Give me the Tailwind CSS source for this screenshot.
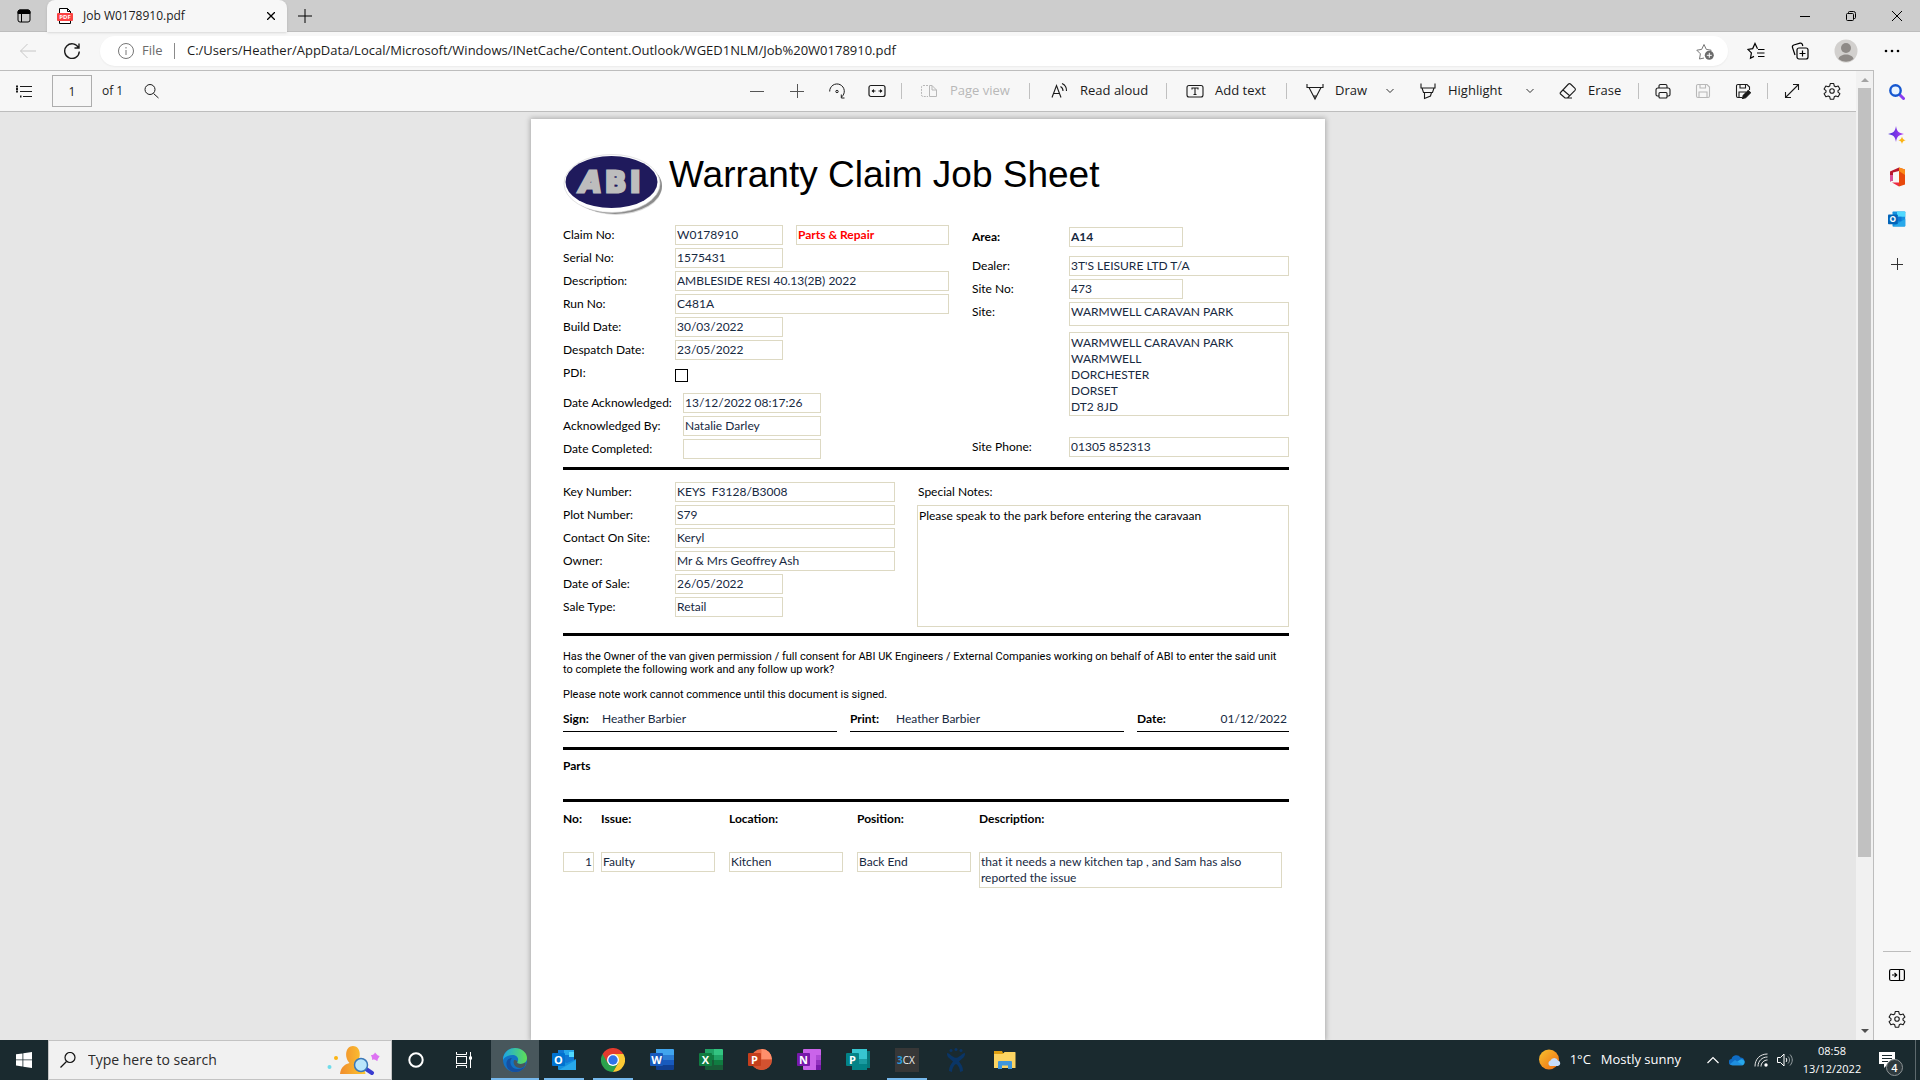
<!DOCTYPE html>
<html lang="en">
<head>
    <meta charset="UTF-8">
    <meta name="viewport" content="width=device-width, initial-scale=1.0">
    <title>Job W0178910.pdf</title>
    <script src="https://cdn.jsdelivr.net/npm/@tailwindcss/browser@4"></script>
</head>
<body class="h-screen flex flex-col overflow-hidden bg-[#f7f7f7] text-[#1b1b1b] text-[13px] font-['Open_Sans',sans-serif]">

    <!-- Tab strip -->
    <header class="h-8 shrink-0 flex bg-[#cdcdcd] border-b border-[#bdbdbd]">
        <button aria-label="Tab actions" class="w-[47px] flex items-center justify-center">
            <svg class="size-4" viewBox="0 0 16 16" fill="none" stroke="#000"><rect x="2" y="2" width="12" height="12" rx="2"/><path d="M2 4a2 2 0 0 1 2-2h8a2 2 0 0 1 2 2v1.500H2z" fill="#000"/><path d="M5.500 5v9"/></svg>
        </button>
        <div class="w-60 h-8 flex items-center bg-[#f7f7f7] rounded-t-lg pl-2.5 pr-2 shadow-sm">
            <svg class="size-4 shrink-0" viewBox="0 0 16 16"><path d="M2.500.500h8l3 3v12h-11z" fill="#fff" stroke="#000"/><path d="M10.500.500v3h3" fill="none" stroke="#000"/><rect x="0" y="5" width="16" height="8" rx="1" fill="#fb4343"/><text x="8" y="11.300" font-family="Open Sans" font-size="6" font-weight="700" fill="#fff" text-anchor="middle">PDF</text></svg>
            <span class="ml-2.5 text-xs">Job W0178910.pdf</span>
            <button aria-label="Close tab" class="ml-auto size-4 flex items-center justify-center">
                <svg class="size-2" viewBox="0 0 8 8" stroke="#000" stroke-width="1.300"><path d="M0 0l8 8M8 0L0 8"/></svg>
            </button>
        </div>
        <button aria-label="New tab" class="w-9 flex items-center justify-center">
            <svg class="size-3.5" viewBox="0 0 14 14" stroke="#000"><path d="M7 0v14M0 7h14"/></svg>
        </button>
        <div class="ml-auto flex">
            <button aria-label="Minimise" class="w-[46px] flex items-center justify-center"><svg class="size-2.5" viewBox="0 0 10 10" stroke="#000"><path d="M0 5.500h10"/></svg></button>
            <button aria-label="Restore" class="w-[46px] flex items-center justify-center"><svg class="size-2.5" viewBox="0 0 10 10" fill="none" stroke="#000"><rect x=".5" y="2.500" width="7" height="7" rx="1"/><path d="M2.500 2V1.500a1 1 0 0 1 1-1h4a2 2 0 0 1 2 2v4a1 1 0 0 1-1 1H8"/></svg></button>
            <button aria-label="Close" class="w-[46px] flex items-center justify-center"><svg class="size-2.5" viewBox="0 0 10 10" stroke="#000"><path d="M0 0l10 10M10 0L0 10"/></svg></button>
        </div>
    </header>

    <!-- Address bar -->
    <div class="h-[38px] shrink-0 flex items-center">
        <button aria-label="Back" class="w-11 ml-1.5 flex justify-center"><svg class="size-4" viewBox="0 0 16 16" fill="none" stroke="#c6c6c6"><path d="M16 8H.500M7.500 1L.500 8l7 7"/></svg></button>
        <button aria-label="Refresh" class="w-11 flex justify-center"><svg class="size-4" viewBox="0 0 16 16" fill="none" stroke="#1b1b1b" stroke-width="1.400"><path d="M14.600 5A7.300 7.300 0 1 0 15.300 8.500M15 .500V5h-4.500"/></svg></button>
        <div class="flex-1 h-[30px] ml-1.5 flex items-center rounded-full bg-white shadow-xs pl-[18px] pr-[14px]">
            <svg class="size-4 shrink-0" viewBox="0 0 16 16" fill="none" stroke="#767676"><circle cx="8" cy="8" r="7.500"/><path d="M8 7v5M8 4v1.500"/></svg>
            <span class="ml-2 w-8 text-[#6b6b6b]">File</span>
            <span class="w-px h-4 bg-[#8a8a8a]"></span>
            <input aria-label="Address" class="flex-1 ml-3 outline-none" value="C:/Users/Heather/AppData/Local/Microsoft/Windows/INetCache/Content.Outlook/WGED1NLM/Job%20W0178910.pdf">
            <button aria-label="Add to favourites"><svg class="size-[18px]" viewBox="0 0 18 18" fill="none" stroke="#767676"><path d="M8 16l-4.500 1 .9-5.200L.800 8.200l4.900-.800L8 2.500l2.300 4.900 4.900.800-1 1"/><circle cx="13.300" cy="13.300" r="4.500" fill="#6b6b6b" stroke="none"/><path d="M13.300 10.800v5M10.800 13.300h5" stroke="#fff"/></svg></button>
        </div>
        <div class="flex items-center pl-1.5 pr-1.5">
            <button aria-label="Favourites" class="w-11 flex justify-center"><svg class="size-[18px]" viewBox="0 0 18 18" fill="none" stroke="#000" stroke-width="1.200"><path d="M10.500 6.800L8 1.500 5.700 6.600.900 7.400l3.500 3.500-.900 5.300L7 14.400M11 7.500h6.500M10 11h7.500M11 14.500h6.500"/></svg></button>
            <button aria-label="Collections" class="w-11 flex justify-center"><svg class="size-[18px]" viewBox="0 0 18 18" fill="none" stroke="#000" stroke-width="1.200"><rect x="6" y="6" width="11" height="11" rx="2"/><path d="M11.500 8.500v6M8.500 11.500h6M4 13L1.500 5.500a2 2 0 0 1 1.300-2.500L9 1.200a2 2 0 0 1 2.400 1.300l.4 1.500"/></svg></button>
            <button aria-label="Profile" class="w-12 flex justify-center"><svg class="size-6" viewBox="0 0 24 24"><circle cx="12" cy="12" r="11.500" fill="#d2d0ce"/><circle cx="12" cy="9" r="5" fill="#8e8a87"/><path d="M4.500 20c1-6 14-6 15 0a11.500 11.500 0 0 1-15 0z" fill="#8e8a87"/></svg></button>
            <button aria-label="Settings and more" class="w-11 flex justify-center"><svg class="size-4" viewBox="0 0 16 16"><circle cx="2" cy="8" r="1.300"/><circle cx="8" cy="8" r="1.300"/><circle cx="14" cy="8" r="1.300"/></svg></button>
        </div>
    </div>

    <div class="flex-1 min-h-0 flex">
        <main class="flex-1 min-w-0 flex border-t border-r border-[#bdbdbd]">
            <div class="flex-1 min-w-0 flex flex-col">

                <!-- PDF toolbar -->
                <div class="h-[41px] shrink-0 flex items-center border-b border-[#bdbdbd]">
                    <button aria-label="Contents" class="ml-1 w-10 flex justify-center"><svg class="size-4" viewBox="0 0 16 16" fill="none" stroke="#1b1b1b"><path d="M4 3.500h12M4 8.500h12M7 13.500h9" /><path d="M0 3.500h2M0 8.500h2M4 13.500h1.500M0 6h2" stroke-width="2"/></svg></button>
                    <input aria-label="Page number" class="ml-2 w-10 h-8 border border-[#adadad] text-center text-xs" value="1">
                    <span class="ml-2.5 text-xs">of 1</span>
                    <button aria-label="Find" class="ml-2 w-10 flex justify-center"><svg class="size-4" viewBox="0 0 16 16" fill="none" stroke="#1b1b1b"><circle cx="7" cy="6.500" r="5"/><path d="M10.500 10.500l5 4.500"/></svg></button>

                    <div class="ml-auto pr-1 h-full flex items-center">
                        <button aria-label="Zoom out" class="w-10 flex justify-center"><svg class="size-4" viewBox="0 0 16 16" stroke="#555"><path d="M1 8.500h14"/></svg></button>
                        <button aria-label="Zoom in" class="w-10 flex justify-center"><svg class="size-4" viewBox="0 0 16 16" stroke="#555"><path d="M1 8.500h14M8.500 1v14"/></svg></button>
                        <button aria-label="Rotate" class="w-10 flex justify-center"><svg class="size-4" viewBox="0 0 16 16" fill="none" stroke="#1b1b1b"><path d="M.700 8.500A7.300 7.300 0 1 1 12.500 14M15.500 15h-3.200v-3.500"/><circle cx="8" cy="8.500" r="1.200"/></svg></button>
                        <button aria-label="Fit to width" class="w-10 flex justify-center"><svg class="h-4 w-[18px]" viewBox="0 0 18 16" fill="none" stroke="#1b1b1b" stroke-width="1.200"><rect x="1" y="2.500" width="16" height="11" rx="2"/><path d="M4 8h3.500M10.500 8H14"/><path d="M3.500 8L6 6v4zM14.500 8L12 6v4z" fill="#1b1b1b" stroke="none"/></svg></button>
                        <span class="w-px h-4 mx-1 bg-[#c0c0c0]"></span>
                        <button disabled class="w-[119px] pl-3.5 flex items-center gap-2.5 text-[#b8b8b8]"><svg class="size-5" viewBox="0 0 20 20" fill="none" stroke="#b8b8b8"><path d="M9.500 4.500H12l4.500 4.500v6.500h-7zM12 4.500V9h4.500"/><path d="M8 4.500H3a1.500 1.500 0 0 0-1.500 1.500v8A1.500 1.500 0 0 0 3 15.500h5" stroke-dasharray="2 1"/></svg>Page view</button>
                        <span class="w-px h-4 mx-1 bg-[#c0c0c0]"></span>
                        <button class="w-32 pl-4 flex items-center gap-2.5"><svg class="size-5" viewBox="0 0 20 20" fill="none" stroke="#1b1b1b" stroke-width="1.100"><path d="M2 16.500L6.500 4.500 11 16.500M3.600 12.500h5.800M10.500 5.500a5 5 0 0 1 2.500 4.500M12 2.500c3 1.300 4.700 4 4.500 7.500"/></svg>Read aloud</button>
                        <span class="w-px h-4 mx-1 bg-[#c0c0c0]"></span>
                        <button class="w-[111px] pl-3.5 flex items-center gap-2.5"><svg class="size-5" viewBox="0 0 20 20" fill="none" stroke="#1b1b1b" stroke-width="1.100"><rect x="2" y="4.500" width="16" height="11.500" rx="2"/><path d="M7 8.500V7h6v1.500M10 7v6.500M8.500 13.500h3"/></svg>Add text</button>
                        <span class="w-px h-4 mx-1 bg-[#c0c0c0]"></span>
                        <button class="w-[89px] pl-3.5 flex items-center gap-2.5"><svg class="size-5" viewBox="0 0 20 20" fill="none" stroke="#1b1b1b" stroke-width="1.100"><path d="M2 3v3.500h16V3M4 6.500l6 11.500 6-11.500M8.500 15h3L10 18z"/></svg>Draw</button>
                        <button aria-label="Draw options" class="w-5 flex justify-center"><svg class="size-2" viewBox="0 0 8 8" fill="none" stroke="#333"><path d="M.500 2L4 5.500 7.500 2"/></svg></button>
                        <button class="w-[120px] pl-[18px] flex items-center gap-2.5"><svg class="size-5" viewBox="0 0 20 20" fill="none" stroke="#1b1b1b" stroke-width="1.100"><path d="M3 2.500v4.500h14V2.500M4 7l1.500 4.500h9L16 7M6.500 11.500v6l6-2.500 1-3.500"/></svg>Highlight</button>
                        <button aria-label="Highlight options" class="w-5 flex justify-center"><svg class="size-2" viewBox="0 0 8 8" fill="none" stroke="#333"><path d="M.500 2L4 5.500 7.500 2"/></svg></button>
                        <button class="w-[94px] pl-[18px] flex items-center gap-2.5"><svg class="size-5" viewBox="0 0 20 20" fill="none" stroke="#1b1b1b" stroke-width="1.100"><path d="M2.500 11.500L10.500 3a1.500 1.500 0 0 1 2 0L17 7.300a1.500 1.500 0 0 1 0 2L9.500 17H7l-4.500-4a1 1 0 0 1 0-1.500zM5 9l7 6M9 17h5"/></svg>Erase</button>
                        <span class="w-px h-4 mx-1 bg-[#c0c0c0]"></span>
                        <button aria-label="Print" class="w-10 flex justify-center"><svg class="size-4" viewBox="0 0 16 16" fill="none" stroke="#1b1b1b" stroke-width="1.100"><path d="M4 13H2.500A1.500 1.500 0 0 1 1 11.500V7a2 2 0 0 1 2-2h10a2 2 0 0 1 2 2v4.500a1.500 1.500 0 0 1-1.500 1.500H12M4 5V3a1.500 1.500 0 0 1 1.500-1.500h5A1.500 1.500 0 0 1 12 3v2"/><rect x="4" y="9.500" width="8" height="5.500" rx="1"/></svg></button>
                        <button aria-label="Save" disabled class="w-10 flex justify-center"><svg class="size-4" viewBox="0 0 16 16" fill="none" stroke="#b8b8b8" stroke-width="1.100"><path d="M1.500 3A1.500 1.500 0 0 1 3 1.500h9L14.500 4v9a1.500 1.500 0 0 1-1.500 1.500H3A1.500 1.500 0 0 1 1.500 13zM5 1.500V5h5.500V1.500M4 14.500V9h8v5.500"/></svg></button>
                        <button aria-label="Save as" class="w-10 flex justify-center"><svg class="size-4" viewBox="0 0 16 16" fill="none" stroke="#1b1b1b" stroke-width="1.100"><path d="M7 14.500H3A1.500 1.500 0 0 1 1.500 13V3A1.500 1.500 0 0 1 3 1.500h9L14.500 4v3M5 1.500V5h5.500V1.500M4 14.500V9h7"/><path d="M7.500 15.500l.7-3 5-5 2.300 2.300-5 5z" fill="#1b1b1b"/></svg></button>
                        <span class="w-px h-4 mx-1 bg-[#c0c0c0]"></span>
                        <button aria-label="Full screen" class="w-10 flex justify-center"><svg class="size-4" viewBox="0 0 16 16" fill="none" stroke="#1b1b1b" stroke-width="1.100"><path d="M1.500 14.500l13-13M9 1.500h5.500V7M1.500 9v5.500H7"/></svg></button>
                        <button aria-label="Settings" class="w-10 flex justify-center"><svg class="size-[18px]" viewBox="0 0 24 24" fill="none" stroke="#1b1b1b" stroke-width="1.500"><circle cx="12" cy="12" r="3"/><path d="M9.700 2h4.600l.7 3.200 2 1.200 3.200-1 2.300 4-2.500 2.200v1.800l2.500 2.200-2.300 4-3.200-1-2 1.200-.7 3.200H9.700L9 19.800l-2-1.200-3.200 1-2.300-4L4 13.400v-1.800L1.500 9.400l2.300-4 3.200 1 2-1.200z" stroke-linejoin="round"/></svg></button>
                    </div>
                </div>

                <!-- Document -->
                <div class="flex-1 min-h-0 overflow-hidden bg-[#e6e6e6] pt-[7px]">
                    <form class="w-full max-w-[794px] min-h-full mx-auto bg-white shadow-[0_0_5px_1px_rgba(0,0,0,0.25)] pl-8 pr-9 pt-[34px] text-xs leading-4 text-black font-['Lato',sans-serif]">
                        <div class="flex h-[72px]">
                            <svg class="w-[102px] h-[66px]" viewBox="0 0 102 66" role="img" aria-label="ABI">
                                <ellipse cx="53" cy="34" rx="46" ry="28" fill="#000" opacity=".15"/>
                                <ellipse cx="52" cy="33" rx="47" ry="28" fill="#8c8c8c"/>
                                <ellipse cx="49" cy="30.500" rx="48" ry="29" fill="#fff" stroke="#d0d0d0" stroke-width=".6"/>
                                <ellipse cx="48.500" cy="29" rx="46" ry="26" fill="#1f1a5c"/>
                                <g font-family="DejaVu Sans" font-size="28" font-weight="700" fill="#bdbdbd" stroke="#bdbdbd" stroke-width="3">
                                    <text x="17" y="38.500" font-style="italic">A</text>
                                    <text x="42" y="38.500">B</text>
                                    <text x="67" y="38.500">I</text>
                                </g>
                            </svg>
                            <h1 class="ml-1 text-[37px] leading-[44px] whitespace-nowrap font-['Liberation_Sans',sans-serif]">Warranty Claim Job Sheet</h1>
                        </div>

                        <!-- Claim details -->
                        <section class="flex items-start justify-between h-[242px]">
                            <div class="flex flex-col gap-[3px]">
                                <div class="flex h-5"><label for="claim" class="w-28 pt-0.5">Claim No:</label><input id="claim" readonly class="w-[108px] border border-[#ddd9c3] px-px text-[#17293f]" value="W0178910"><input aria-label="Claim type" readonly class="ml-[13px] w-[153px] border border-[#ddd9c3] px-px font-bold text-[#ff0000]" value="Parts &amp; Repair"></div>
                                <div class="flex h-5"><label for="serial" class="w-28 pt-0.5">Serial No:</label><input id="serial" readonly class="w-[108px] border border-[#ddd9c3] px-px text-[#17293f]" value="1575431"></div>
                                <div class="flex h-5"><label for="desc" class="w-28 pt-0.5">Description:</label><input id="desc" readonly class="w-[274px] border border-[#ddd9c3] px-px text-[#17293f]" value="AMBLESIDE RESI 40.13(2B) 2022"></div>
                                <div class="flex h-5"><label for="run" class="w-28 pt-0.5">Run No:</label><input id="run" readonly class="w-[274px] border border-[#ddd9c3] px-px text-[#17293f]" value="C481A"></div>
                                <div class="flex h-5"><label for="build" class="w-28 pt-0.5">Build Date:</label><input id="build" readonly class="w-[108px] border border-[#ddd9c3] px-px text-[#17293f]" value="30/03/2022"></div>
                                <div class="flex h-5"><label for="despatch" class="w-28 pt-0.5">Despatch Date:</label><input id="despatch" readonly class="w-[108px] border border-[#ddd9c3] px-px text-[#17293f]" value="23/05/2022"></div>
                                <div class="flex h-5"><label for="pdi" class="w-28 pt-0.5">PDI:</label><input id="pdi" type="checkbox" class="appearance-none size-[13px] mt-1.5 border border-black bg-white"></div>
                                <div class="flex h-5 mt-[7px]"><label for="ackdate" class="w-[120px] pt-0.5">Date Acknowledged:</label><input id="ackdate" readonly class="w-[138px] border border-[#ddd9c3] px-px text-[#17293f]" value="13/12/2022 08:17:26"></div>
                                <div class="flex h-5"><label for="ackby" class="w-[120px] pt-0.5">Acknowledged By:</label><input id="ackby" readonly class="w-[138px] border border-[#ddd9c3] px-px text-[#17293f]" value="Natalie Darley"></div>
                                <div class="flex h-5"><label for="completed" class="w-[120px] pt-0.5">Date Completed:</label><input id="completed" readonly class="w-[138px] border border-[#ddd9c3] px-px text-[#17293f]"></div>
                            </div>
                            <div class="w-[317px] flex flex-col gap-[3px] pt-0.5">
                                <div class="flex h-5 font-bold"><label for="area" class="w-[97px] pt-0.5">Area:</label><input id="area" readonly class="w-[114px] border border-[#ddd9c3] px-px text-[#17293f]" value="A14"></div>
                                <div class="flex h-5 mt-1.5"><label for="dealer" class="w-[97px] pt-0.5">Dealer:</label><input id="dealer" readonly class="flex-1 border border-[#ddd9c3] px-px text-[#17293f]" value="3T'S LEISURE LTD T/A"></div>
                                <div class="flex h-5"><label for="siteno" class="w-[97px] pt-0.5">Site No:</label><input id="siteno" readonly class="w-[114px] border border-[#ddd9c3] px-px text-[#17293f]" value="473"></div>
                                <div class="flex h-6"><label for="site" class="w-[97px] pt-0.5">Site:</label><input id="site" readonly class="flex-1 border border-[#ddd9c3] px-px pb-1 text-[#17293f]" value="WARMWELL CARAVAN PARK"></div>
                                <div class="flex h-[84px] mt-[3px] pl-[97px]"><textarea aria-label="Site address" readonly class="flex-1 resize-none overflow-hidden border border-[#ddd9c3] px-px pt-0.5 text-[#17293f]">WARMWELL CARAVAN PARK
WARMWELL
DORCHESTER
DORSET
DT2 8JD</textarea></div>
                                <div class="flex h-5 mt-[18px]"><label for="phone" class="w-[97px] pt-0.5">Site Phone:</label><input id="phone" readonly class="flex-1 border border-[#ddd9c3] px-px text-[#17293f]" value="01305 852313"></div>
                            </div>
                        </section>

                        <!-- Owner and notes -->
                        <section class="flex justify-between border-t-3 border-black pt-3 h-[166px]">
                            <div class="flex flex-col gap-[3px]">
                                <div class="flex h-5"><label for="key" class="w-28 pt-0.5">Key Number:</label><input id="key" readonly class="w-[220px] border border-[#ddd9c3] px-px whitespace-pre text-[#17293f]" value="KEYS  F3128/B3008"></div>
                                <div class="flex h-5"><label for="plot" class="w-28 pt-0.5">Plot Number:</label><input id="plot" readonly class="w-[220px] border border-[#ddd9c3] px-px text-[#17293f]" value="S79"></div>
                                <div class="flex h-5"><label for="contact" class="w-28 pt-0.5">Contact On Site:</label><input id="contact" readonly class="w-[220px] border border-[#ddd9c3] px-px text-[#17293f]" value="Keryl"></div>
                                <div class="flex h-5"><label for="owner" class="w-28 pt-0.5">Owner:</label><input id="owner" readonly class="w-[220px] border border-[#ddd9c3] px-px text-[#17293f]" value="Mr &amp; Mrs Geoffrey Ash"></div>
                                <div class="flex h-5"><label for="sale" class="w-28 pt-0.5">Date of Sale:</label><input id="sale" readonly class="w-[108px] border border-[#ddd9c3] px-px text-[#17293f]" value="26/05/2022"></div>
                                <div class="flex h-5"><label for="type" class="w-28 pt-0.5">Sale Type:</label><input id="type" readonly class="w-[108px] border border-[#ddd9c3] px-px text-[#17293f]" value="Retail"></div>
                            </div>
                            <div class="w-[372px] flex flex-col">
                                <label for="notes" class="h-[23px] pt-0.5 px-px">Special Notes:</label>
                                <textarea id="notes" readonly class="h-[122px] resize-none border border-[#ddd9c3] px-px pt-0.5">Please speak to the park before entering the caravaan</textarea>
                            </div>
                        </section>

                        <!-- Consent and signature -->
                        <section class="border-t-3 border-black pt-3.5 h-[114px]">
                            <div class="text-[11px] leading-[13px] font-['Roboto',sans-serif]">
                                <p>Has the Owner of the van given permission / full consent for ABI UK Engineers / External Companies working on behalf of ABI to enter the said unit<br>to complete the following work and any follow up work?</p>
                                <p class="mt-3">Please note work cannot commence until this document is signed.</p>
                            </div>
                            <div class="flex justify-between mt-2">
                                <div class="w-[274px] h-[23px] flex border-b border-black pt-0.5"><label for="sign" class="w-[39px] font-bold">Sign:</label><input id="sign" readonly class="h-4 min-w-0 flex-1 text-[#17293f]" value="Heather Barbier"></div>
                                <div class="w-[274px] h-[23px] flex border-b border-black pt-0.5"><label for="print" class="w-[46px] font-bold">Print:</label><input id="print" readonly class="h-4 min-w-0 flex-1 text-[#17293f]" value="Heather Barbier"></div>
                                <div class="w-[152px] h-[23px] flex border-b border-black pt-0.5 pr-0.5"><label for="date" class="font-bold">Date:</label><input id="date" readonly class="h-4 min-w-0 flex-1 text-right text-[#17293f]" value="01/12/2022"></div>
                            </div>
                        </section>

                        <h2 class="border-t-3 border-black h-[52px] pt-2 font-bold">Parts</h2>

                        <table class="w-full table-fixed border-t-3 border-black text-left">
                            <thead>
                                <tr class="h-[51px] align-top">
                                    <th class="w-[38px] pt-[9px]">No:</th>
                                    <th class="w-32 pt-[9px]">Issue:</th>
                                    <th class="w-32 pt-[9px]">Location:</th>
                                    <th class="w-[122px] pt-[9px]">Position:</th>
                                    <th class="pt-[9px]">Description:</th>
                                </tr>
                            </thead>
                            <tbody>
                                <tr class="align-top text-[#17293f]">
                                    <td class="pr-[7px]"><input aria-label="No" readonly class="block w-full h-5 border border-[#ddd9c3] px-px text-right" value="1"></td>
                                    <td class="pr-3.5"><input aria-label="Issue" readonly class="block w-full h-5 border border-[#ddd9c3] px-px" value="Faulty"></td>
                                    <td class="pr-3.5"><input aria-label="Location" readonly class="block w-full h-5 border border-[#ddd9c3] px-px" value="Kitchen"></td>
                                    <td class="pr-2"><input aria-label="Position" readonly class="block w-full h-5 border border-[#ddd9c3] px-px" value="Back End"></td>
                                    <td class="pr-[7px]"><textarea aria-label="Description" readonly class="block w-full h-9 resize-none overflow-hidden border border-[#ddd9c3] px-px pt-px">that it needs a new kitchen tap , and Sam has also
reported the issue</textarea></td>
                                </tr>
                            </tbody>
                        </table>
                    </form>
                </div>
            </div>

            <!-- Scrollbar -->
            <div class="w-[17px] shrink-0 flex flex-col items-center bg-[#f1f1f1]">
                <svg class="w-2 h-[17px]" viewBox="0 0 8 17" fill="#a3a3a3"><path d="M0 11l4-4 4 4z"/></svg>
                <div class="w-[13px] h-[769px] bg-[#c1c1c1]"></div>
                <svg class="w-2 h-[17px] mt-auto" viewBox="0 0 8 17" fill="#505050"><path d="M0 6l4 4 4-4z"/></svg>
            </div>
        </main>

        <!-- Edge sidebar -->
        <aside class="w-[46px] shrink-0 flex flex-col items-center">
            <button aria-label="Search" class="h-11 flex items-center"><svg class="size-4" viewBox="0 0 16 16" fill="none"><path d="M10 10l4.500 4.500" stroke="#8b3df0" stroke-width="3" stroke-linecap="round"/><circle cx="6.500" cy="6.500" r="5.200" fill="#e9f4ff" stroke="#1557d0" stroke-width="2.400"/></svg></button>
            <button aria-label="Discover" class="h-[42px] flex items-center"><svg class="size-[18px]" viewBox="0 0 18 18"><defs><linearGradient id="spark"><stop stop-color="#4430d8"/><stop offset="1" stop-color="#b43cf5"/></linearGradient></defs><path d="M8 0c1 5.500 2.500 7 8 8-5.500 1-7 2.500-8 8-1-5.500-2.500-7-8-8 5.500-1 7-2.500 8-8z" fill="url(#spark)"/><path d="M14 10.500c.6 2.500 1.200 3 3.700 3.700-2.500.600-3.100 1.200-3.700 3.700-.6-2.500-1.200-3.100-3.700-3.700 2.500-.700 3.100-1.200 3.700-3.700z" fill="#fbb414"/></svg></button>
            <button aria-label="Office" class="h-[42px] flex items-center"><svg class="size-5" viewBox="0 0 20 20"><path d="M12 .500L3 4.500v10l3-1V5.500l6-1.500z" fill="#b8172e"/><path d="M12 .500l6 2v15l-6 2z" fill="#e8490c"/><path d="M12 .500l6 2V8l-6-4z" fill="#fb8c1a"/><path d="M5 15.500h7v4z" fill="#ed2b43"/><path d="M3 8v6.500l3-1V8z" fill="#d94f98"/></svg></button>
            <button aria-label="Outlook" class="h-[42px] flex items-center"><svg class="size-[18px]" viewBox="0 0 24 24"><rect x="6" y="2" width="17" height="20" rx="1" fill="#1490df"/><path d="M12 2h11v7H12z" fill="#50d9ff"/><path d="M12 9h6v6h-6z" fill="#0f78d4"/><path d="M6 22L23 12v9a1 1 0 0 1-1 1z" fill="#28a8ea"/><rect x="0" y="6" width="13" height="13" rx="1" fill="#0364b8"/><text x="6.500" y="16.500" font-family="Open Sans" font-size="11" font-weight="700" fill="#fff" text-anchor="middle">O</text></svg></button>
            <button aria-label="Add" class="h-12 flex items-center"><svg class="size-3" viewBox="0 0 12 12" stroke="#333"><path d="M6.500 0v12M0 6.500h12"/></svg></button>
            <div class="mt-auto w-7 h-px bg-[#bdbdbd]"></div>
            <button aria-label="Hide sidebar" class="h-[46px] flex items-center"><svg class="size-4" viewBox="0 0 16 16" fill="none" stroke="#000" stroke-width="1.200"><rect x=".6" y="2.500" width="14.800" height="11" rx="1.500"/><path d="M10.500 2.500v11M3 8h4.500M5.500 5.800L7.700 8l-2.200 2.200"/></svg></button>
            <button aria-label="Sidebar settings" class="h-[42px] flex items-center"><svg class="size-[18px]" viewBox="0 0 24 24" fill="none" stroke="#1b1b1b" stroke-width="1.500"><circle cx="12" cy="12" r="3"/><path d="M9.700 2h4.600l.7 3.200 2 1.200 3.200-1 2.300 4-2.500 2.200v1.800l2.500 2.200-2.300 4-3.200-1-2 1.200-.7 3.200H9.700L9 19.800l-2-1.200-3.200 1-2.300-4L4 13.400v-1.800L1.500 9.400l2.300-4 3.200 1 2-1.200z" stroke-linejoin="round"/></svg></button>
        </aside>
    </div>

    <!-- Taskbar -->
    <footer class="h-10 shrink-0 flex items-stretch bg-[#1a2a2f] text-white">
        <button aria-label="Start" class="w-12 flex items-center justify-center"><svg class="size-4" viewBox="0 0 16 16" fill="#fff"><path d="M0 2.300L6.500 1.400v6.100H0zM7.300 1.300L16 0v7.500H7.300zM0 8.300h6.500v6.200L0 13.600zM7.300 8.300H16V16l-8.700-1.300z"/></svg></button>
        <div class="w-[344px] flex items-center bg-[#f1f1f1] border border-[#c3c3c3] text-[#2b2b2b] pl-[11px] pr-2">
            <svg class="size-4 shrink-0" viewBox="0 0 16 16" fill="none" stroke="#111" stroke-width="1.200"><circle cx="10" cy="5.500" r="5"/><path d="M6.500 9.500L.500 15.500"/></svg>
            <input aria-label="Search" class="flex-1 min-w-0 ml-3 text-sm outline-none placeholder:text-[#2b2b2b]" placeholder="Type here to search">
            <svg class="w-14 h-[30px] shrink-0" viewBox="0 0 56 30"><defs><linearGradient id="person"><stop stop-color="#f08c2c"/><stop offset="1" stop-color="#fdc830"/></linearGradient></defs><circle cx="9" cy="13" r="2" fill="#fbb414"/><circle cx="2.500" cy="22" r="2" fill="#6fdcea"/><path d="M13 29c1-8 6-10 9.500-11C17 12 18.500 1 26 1s9 11 3.500 17c5 1 8 5 9 11z" fill="url(#person)"/><path d="M39 24l6 4" stroke="#3a3dd0" stroke-width="4" stroke-linecap="round"/><circle cx="34" cy="20" r="6.500" fill="#b9e6fb" stroke="#3a78b8" stroke-width="1.500"/><path d="M48 7.500c1.500 1 2 3 4.500 3.500 0 1.500-2 2-2 5-1.500 0-2-2.500-5.500-1 .5-2-.5-3-1-5 2 0 3-.5 4-2.500z" fill="#dd72f2"/></svg>
        </div>
        <button aria-label="Cortana" class="w-12 flex items-center justify-center"><svg class="size-4" viewBox="0 0 16 16" fill="none" stroke="#fff" stroke-width="2"><circle cx="8" cy="8" r="6.700"/></svg></button>
        <button aria-label="Task view" class="w-12 flex items-center justify-center"><svg class="size-4" viewBox="0 0 16 16" fill="none" stroke="#fff"><rect x=".5" y="4.500" width="10" height="7"/><path d="M.500 0v2.500h10V0M.500 16v-2.500h10V16M14.500 0v16"/><path d="M13 4.500h3v3h-3z" fill="#fff" stroke="none"/></svg></button>
        <div class="ml-[3px] flex gap-px">
            <button aria-label="Edge" class="w-12 flex items-center justify-center bg-[#48575c] border-b-2 border-[#76b9ed] pt-0.5"><svg class="size-6" viewBox="0 0 24 24"><defs><linearGradient id="edgeA"><stop stop-color="#1ba5e6"/><stop offset="1" stop-color="#5fdf54"/></linearGradient></defs><circle cx="12" cy="12" r="12" fill="#1272c4"/><path d="M0 12C0 5 5.500 0 12 0s12 4.500 12 10c0 4-3 6-6.500 6-3 0-4-1-3-2.500 2-3-1-6.500-5-6.500-5 0-8 2-9.500 5z" fill="url(#edgeA)"/><path d="M9 10c-3 3-2 10 5 11 3 .500 6-1 8-3-2 4-6 6-10 6C5 24 2 17 4 13c1-2 3-3 5-3z" fill="#1550a0"/><path d="M14.500 13.500C13.500 15 14.500 16 17.500 16c2 0 3.500-.500 4.800-1.700l.3 2.500c-1 2-3 3.200-5.600 3.200-4.500 0-7.500-4-6-8 1.500 0 3 .500 3.500 1.500z" fill="#48575c"/></svg></button>
            <button aria-label="Outlook" class="w-12 px-1"><span class="h-full flex items-center justify-center border-b-2 border-[#76b9ed] pt-0.5"><svg class="size-6" viewBox="0 0 24 24"><path d="M6 2h16v14H6z" fill="#0f78d4"/><path d="M12 2h10v5H12z" fill="#28a8ea"/><path d="M17 4h5v5h-5z" fill="#50d9ff"/><path d="M6 21V12l9 3 9-4v10a1 1 0 0 1-1 1H7a1 1 0 0 1-1-1z" fill="#1490df"/><path d="M7 22l17-10v10z" fill="#28a8ea"/><rect y="5" width="13" height="13" rx="1" fill="#0072d0"/><text x="6.500" y="15.500" font-family="Open Sans" font-size="11" font-weight="700" fill="#fff" text-anchor="middle">O</text></svg></span></button>
            <button aria-label="Chrome" class="w-12 px-1"><span class="h-full flex items-center justify-center border-b-2 border-[#76b9ed] pt-0.5"><svg class="size-6" viewBox="0 0 24 24"><path d="M12 12L1.600 6A12 12 0 0 0 12 24l5.200-9z" fill="#2ba24c"/><path d="M12 6h10.400A12 12 0 0 1 12 24l5.200-9z" fill="#fcc934"/><path d="M1.600 6L6.800 15 12 6h10.400A12 12 0 0 0 1.600 6z" fill="#e33b2e"/><circle cx="12" cy="12" r="6" fill="#fff"/><circle cx="12" cy="12" r="4.700" fill="#2f73e8"/></svg></span></button>
            <button aria-label="Word" class="w-12 flex items-center justify-center"><svg class="size-6" viewBox="0 0 24 24"><path d="M6 1h17a1 1 0 0 1 1 1v5H6z" fill="#41a5ee"/><path d="M6 7h18v5H6z" fill="#2b7cd3"/><path d="M6 12h18v5H6z" fill="#185abd"/><path d="M6 17h18v4a1 1 0 0 1-1 1H7a1 1 0 0 1-1-1z" fill="#103f91"/><rect y="5" width="13" height="13" rx="1" fill="#185abd"/><text x="6.500" y="15.500" font-family="Open Sans" font-size="11" font-weight="700" fill="#fff" text-anchor="middle">W</text></svg></button>
            <button aria-label="Excel" class="w-12 flex items-center justify-center"><svg class="size-6" viewBox="0 0 24 24"><path d="M6 1h9v6H6z" fill="#21a366"/><path d="M15 1h8a1 1 0 0 1 1 1v5h-9z" fill="#33c481"/><path d="M6 7h9v5H6z" fill="#107c41"/><path d="M15 7h9v5h-9z" fill="#21a366"/><path d="M6 12h18v10H7a1 1 0 0 1-1-1z" fill="#185c37"/><path d="M15 12h9v5h-9z" fill="#107c41"/><rect y="5" width="13" height="13" rx="1" fill="#107c41"/><text x="6.500" y="15.500" font-family="Open Sans" font-size="11" font-weight="700" fill="#fff" text-anchor="middle">X</text></svg></button>
            <button aria-label="PowerPoint" class="w-12 flex items-center justify-center"><svg class="size-6" viewBox="0 0 24 24"><circle cx="13.500" cy="11.500" r="10.500" fill="#ed6c47"/><path d="M13.500 1A10.500 10.500 0 0 1 24 11.500H13.500z" fill="#ff8f6b"/><path d="M3 11.500h21a10.500 10.500 0 0 1-21 0z" fill="#d35230"/><rect y="5" width="13" height="13" rx="1" fill="#c43e1c"/><text x="6.500" y="15.500" font-family="Open Sans" font-size="11" font-weight="700" fill="#fff" text-anchor="middle">P</text></svg></button>
            <button aria-label="OneNote" class="w-12 flex items-center justify-center"><svg class="size-6" viewBox="0 0 24 24"><rect x="6" y="1" width="18" height="21" rx="1" fill="#ca64ea"/><path d="M19 7h5v5h-5z" fill="#ae4bd5"/><path d="M19 12h5v5h-5z" fill="#9332bf"/><path d="M19 17h5v5h-5z" fill="#7719aa"/><rect y="5" width="13" height="13" rx="1" fill="#7719aa"/><text x="6.500" y="15.500" font-family="Open Sans" font-size="11" font-weight="700" fill="#fff" text-anchor="middle">N</text></svg></button>
            <button aria-label="Publisher" class="w-12 flex items-center justify-center"><svg class="size-6" viewBox="0 0 24 24"><path d="M20 3h4v17h-4z" fill="#06777a"/><path d="M6 1h15v21H6z" fill="#1a9ba1"/><path d="M6 1h15v10H6z" fill="#37c6d0"/><path d="M6 16h15v6H6z" fill="#038387"/><rect y="5" width="13" height="13" rx="1" fill="#038387"/><text x="6.500" y="15.500" font-family="Open Sans" font-size="11" font-weight="700" fill="#fff" text-anchor="middle">P</text></svg></button>
            <button aria-label="3CX" class="w-12 px-1"><span class="h-full flex items-center justify-center border-b-2 border-[#76b9ed] pt-0.5"><svg class="size-6" viewBox="0 0 24 24"><path d="M0 0h24v24H0z" fill="#373737"/><text x="2" y="15.800" font-family="Open Sans" font-size="10" fill="#eee"><tspan fill="#2596d8" font-weight="700">3</tspan>CX</text></svg></span></button>
            <button aria-label="Jira" class="w-12 flex items-center justify-center"><svg class="size-6" viewBox="0 0 24 24" fill="#0a3566"><circle cx="7" cy="2.500" r="1.500"/><circle cx="12" cy="1.500" r="1.500"/><circle cx="17" cy="2.500" r="1.500"/><path d="M3 5c2.500 0 4 3 6 3.500a4 4 0 0 0 6 0C17 8 18.500 5 21 5c.5 4-3 5.500-6 8.500 2 2.500 4 5 4 9.500l-3 1c0-4-2-7-4-8-2 1-4 4-4 8l-3-1c0-4.500 2-7 4-9.500C6 10.500 2.500 9 3 5z"/></svg></button>
            <button aria-label="File Explorer" class="w-12 flex items-center justify-center"><svg class="size-6" viewBox="0 0 24 24"><path d="M1 3h8l1 2h12v4H1z" fill="#e0a012"/><path d="M1 6h9l1.500-2H22a.500.500 0 0 1 .500.500V20H1z" fill="#fcd462"/><path d="M5 21v-7a1 1 0 0 1 1-1h12a1 1 0 0 1 1 1v7h-4v-3.500H9V21z" fill="#3f96dd"/></svg></button>
        </div>

        <div class="ml-auto flex items-center">
            <button class="flex items-center whitespace-nowrap"><svg class="w-6 h-[22px]" viewBox="0 0 24 22"><defs><linearGradient id="sun" x2="1" y2="1"><stop stop-color="#f9c22e"/><stop offset="1" stop-color="#ee6a12"/></linearGradient></defs><circle cx="11" cy="10.500" r="10" fill="url(#sun)"/><path d="M12 17a3 3 0 0 1 .500-5.500 4 4 0 0 1 7.500 0 2.800 2.800 0 0 1 0 5.500z" fill="#c5dbfa"/></svg><span class="ml-2">1°C</span><span class="ml-2.5">Mostly sunny</span></button>
            <button aria-label="Show hidden icons" class="ml-5 w-6 flex justify-center"><svg class="size-3" viewBox="0 0 12 12" fill="none" stroke="#fff" stroke-width="1.200"><path d="M.500 9L6 3.500 11.500 9"/></svg></button>
            <button aria-label="OneDrive" class="w-6 flex justify-center"><svg class="size-4" viewBox="0 0 16 16"><path d="M3 13a3 3 0 0 1-.500-6 5 5 0 0 1 9-1.500A4 4 0 0 1 13.500 13z" fill="#0f6cc4"/><path d="M3 13.300l8-5.500a3 3 0 1 1 2 5.500z" fill="#28a8ea"/><path d="M1 12l5-4 8 5.300H3.500C2.300 13.300 1.500 13 1 12z" fill="#1f8fe0"/></svg></button>
            <button aria-label="Network" class="w-6 flex justify-center"><svg class="size-3.5" viewBox="0 0 14 14" fill="none" stroke="#e8e8e8"><path d="M1 13.500C1 6 6 1 13.500 1M4 13.500C4 8 8 4 13.500 4M7 13.500C7 10 10 7 13.500 7"/><circle cx="12" cy="12" r="1.700" fill="#fff" stroke="none"/></svg></button>
            <button aria-label="Volume" class="w-6 flex justify-center"><svg class="size-4" viewBox="0 0 16 16" fill="none" stroke="#fff"><path d="M.500 5.500h3L7 2v12l-3.500-3.500h-3zM9 6c1 1 1 3 0 4"/><path d="M11 4.500c2 2 2 5 0 7M13 2.500c3 3.500 3 7.500 0 11" stroke="#9aa3a6"/></svg></button>
            <button class="w-[70px] text-[11px] leading-[18px] text-center">08:58<br>13/12/2022</button>
            <button aria-label="Notifications" class="ml-3 w-6 h-10"><svg class="w-6 h-10" viewBox="0 0 24 40"><path d="M0 12h16v12H9l-4 4v-4H0z" fill="#fff"/><path d="M3 15.500h10M3 18.500h10M3 21.500h6" stroke="#1a2a2f"/><circle cx="15.500" cy="27.500" r="8" fill="#2f3a3e" stroke="#8d9496"/><text x="15.500" y="31.500" font-family="Open Sans" font-size="11" font-weight="600" fill="#fff" text-anchor="middle">4</text></svg></button>
            <div class="ml-3 mr-1 w-px h-10 bg-[#5d696d]"></div>
        </div>
    </footer>
</body>
</html>
